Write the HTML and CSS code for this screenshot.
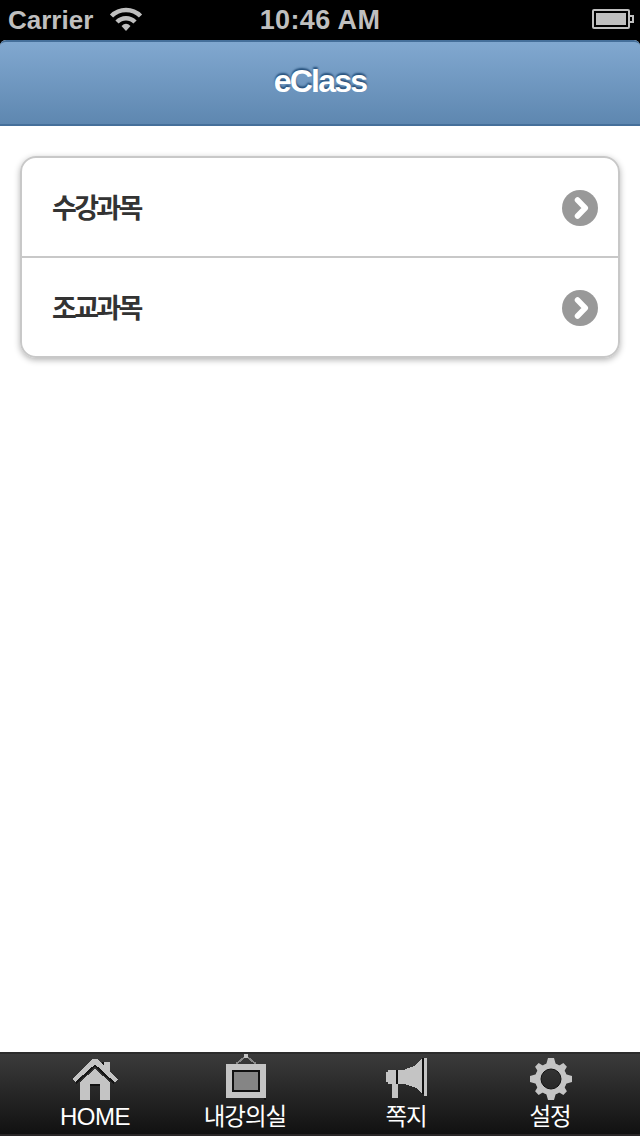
FILE: index.html
```html
<!DOCTYPE html>
<html lang="ko">
<head>
	<meta charset="UTF-8">
	<title>eClass</title>
	<link rel="stylesheet" href="styles.css">
</head>
<body>
	<div class="status">
		<div class="carrier">
			<span>Carrier</span>
			<svg class="wifi" width="32" height="24" viewBox="0 0 32 24">
				<path d="M1.500 9A20.500 20.500 0 0 1 30.500 9" class="wave"/>
				<path d="M7 15A12.500 12.500 0 0 1 25 15" class="wave"/>
				<path d="M16 24l-4.500-5q4.500-4.500 9 0z"/>
			</svg>
		</div>
		<div class="time">10:46 AM</div>
		<svg class="battery" width="42" height="20" viewBox="0 0 42 20">
			<rect x="1" y="1" width="36" height="18" rx="1" class="line"/>
			<rect x="4" y="4" width="30" height="12"/>
			<path d="M38 7h3v6h-3" class="line"/>
		</svg>
	</div>

	<div class="header"><h1>eClass</h1></div>

	<div class="content">
		<ul class="list">
			<li>
				<span>수강과목</span>
				<svg width="36" height="36" viewBox="0 0 36 36">
					<circle cx="18" cy="18" r="18"/>
					<path d="M15.500 10l7.800 8l-7.800 8"/>
				</svg>
			</li>
			<li>
				<span>조교과목</span>
				<svg width="36" height="36" viewBox="0 0 36 36">
					<circle cx="18" cy="18" r="18"/>
					<path d="M15.500 10l7.800 8l-7.800 8"/>
				</svg>
			</li>
		</ul>
	</div>

	<div class="footer">
		<div class="tab">
			<svg width="46" height="44" viewBox="0 0 23 22">
				<path d="M15 7V3h1v5z" class="dark"/>
				<path d="M16 9V3h3v8z"/>
				<path d="M4 22V13l7.500-6.500L19 13v9h-5v-7h-5v7z"/>
				<path d="M2 13.500L11.500 4.800L21 13.500" class="edge"/>
				<path d="M0 11.500L10.500 1.500h2L23 11.500l-1.500 1.500L11.500 4.200L1.500 13z"/>
				<rect x="9" y="14" width="5" height="1" class="dark"/>
			</svg>
			<span class="en">HOME</span>
		</div>
		<div class="tab">
			<svg width="46" height="44" viewBox="0 0 23 22">
				<path d="M7 4L12 0L17 4" class="wire"/>
				<rect x="11" y="-1" width="2" height="2"/>
				<rect x="2" y="4" width="20" height="17"/>
				<rect x="5" y="7" width="14" height="11" class="dark"/>
				<rect x="6" y="8" width="12" height="9" class="photo"/>
				<rect x="21" y="21" width="1" height="1" class="dark"/>
			</svg>
			<span>내강의실</span>
		</div>
		<div class="tab">
			<svg width="46" height="44" viewBox="0 0 23 22">
				<path d="M2.500 7h4v7h-4zM1.500 8h1v5h-1zM4.500 13h3v8h-3z"/>
				<path d="M7.500 7h3l2-1 3-1 2-2 2-1.500v17.500l-3-3-3-1-3-1h-3z"/>
				<path d="M6.500 7h1v7h-1zM19.500 1h1v18h-1z" class="dark"/>
				<path d="M20.500 1h1.500v19h-1.500z"/>
			</svg>
			<span>쪽지</span>
		</div>
		<div class="tab">
			<svg class="gear" width="46" height="44" viewBox="-23 -22 46 44">
				<circle r="13" class="ring"/>
				<path d="M-5-14l2-7h6l2 7zM-5 14l2 7h6l2-7zM-14-5l-7 2v6l7 2zM14-5l7 2v6l-7 2z"/>
				<path d="M-4-14l1.500-6h5l1.500 6zM-4 14l1.500 6h5l1.500-6zM-14-4l-6 1.500v5l6 1.500zM14-4l6 1.500v5l-6 1.500z" transform="rotate(45)"/>
				<circle r="10" class="hole"/>
			</svg>
			<span>설정</span>
		</div>
	</div>
</body>
</html>
```

FILE: styles.css
```css
*{
	box-sizing:border-box;
}
body{
	display:flex;
	flex-direction:column;
	height:1136px;
	margin:0;
	background:#fff;
	font-family:"Liberation Sans","Noto Sans CJK KR",sans-serif;
	overflow:hidden;
}
svg{
	display:block;
	overflow:visible;
}

/* 상태바 */
.status{
	display:grid;
	grid-template-columns:1fr auto 1fr;
	height:40px;
	padding:0 8px 2px 8px;
	align-items:center;
	background:#000;
	color:#bfbfbf;
	font-size:26px;
	font-weight:bold;
}
.carrier{
	display:flex;
	align-items:center;
	gap:17px;
}
.carrier span,
.time{
	padding-top:2px;
}
.time{
	font-size:27px;
	letter-spacing:.4px;
}
.status svg{
	fill:#bfbfbf;
}
.status .wave{
	fill:none;
	stroke:#bfbfbf;
	stroke-width:4.500;
}
.battery{
	justify-self:end;
	margin-right:-2px;
}
.battery .line{
	fill:none;
	stroke:#bfbfbf;
	stroke-width:2;
}

/* 헤더 */
.header{
	height:86px;
	border-top:2px solid #456f9a;
	border-bottom:2px solid #456f9a;
	border-radius:6px 6px 0 0;
	background:linear-gradient(#81a8d0,#5e87b0);
	box-shadow:0 -6px 0 #000;
}
.header h1{
	margin:0;
	color:#fff;
	font-size:32px;
	line-height:78px;
	letter-spacing:-1.800px;
	text-align:center;
	text-shadow:0 -2px 2px #254f7a;
}

/* 목록 */
.content{
	flex:1;
	padding:30px 20px;
}
.list{
	margin:0;
	padding:0;
	border:2px solid #c8c8c8;
	border-radius:16px;
	box-shadow:0 2px 6px rgba(0,0,0,.3);
	list-style:none;
}
.list li{
	display:flex;
	align-items:center;
	justify-content:space-between;
	height:98px;
	padding:2px 20px 0 30px;
	color:#333;
	font-size:27px;
	font-weight:bold;
	letter-spacing:-2.700px;
}
.list li span{
	padding-bottom:3px;
}
.list li + li{
	height:100px;
	border-top:2px solid #c8c8c8;
}
.list circle{
	fill:#999;
}
.list path{
	fill:none;
	stroke:#fff;
	stroke-width:5.500;
	stroke-linecap:round;
	stroke-linejoin:round;
}

/* 하단 탭 */
.footer{
	display:grid;
	grid-template-columns:190px 110px 212px 76px;
	height:84px;
	border-top:2px solid #2c2c2c;
	border-bottom:2px solid #292627;
	background:linear-gradient(#3b3b3b,#111);
}
.tab{
	display:flex;
	flex-direction:column;
	align-items:center;
	color:#fff;
	font-size:23.500px;
	line-height:30px;
	letter-spacing:-1px;
	white-space:nowrap;
}
.tab .en{
	font-size:24px;
	letter-spacing:-.500px;
}
.tab span{
	margin-top:2px;
}
.tab svg{
	margin-top:2px;
	flex:none;
	fill:#c4c4c4;
	shape-rendering:crispEdges;
}
.tab .dark{
	fill:#111;
}
.tab .edge{
	fill:none;
	stroke:#151515;
	stroke-width:1;
}
.tab .wire{
	fill:none;
	stroke:#888;
	stroke-width:1;
}
.tab .photo{
	fill:#858585;
}
.tab .gear{
	position:relative;
	left:1px;
	top:1px;
	shape-rendering:auto;
}
.gear .ring{
	fill:none;
	stroke:#c4c4c4;
	stroke-width:6;
}
.gear .hole{
	fill:none;
	stroke:#111;
	stroke-width:1;
}
```
